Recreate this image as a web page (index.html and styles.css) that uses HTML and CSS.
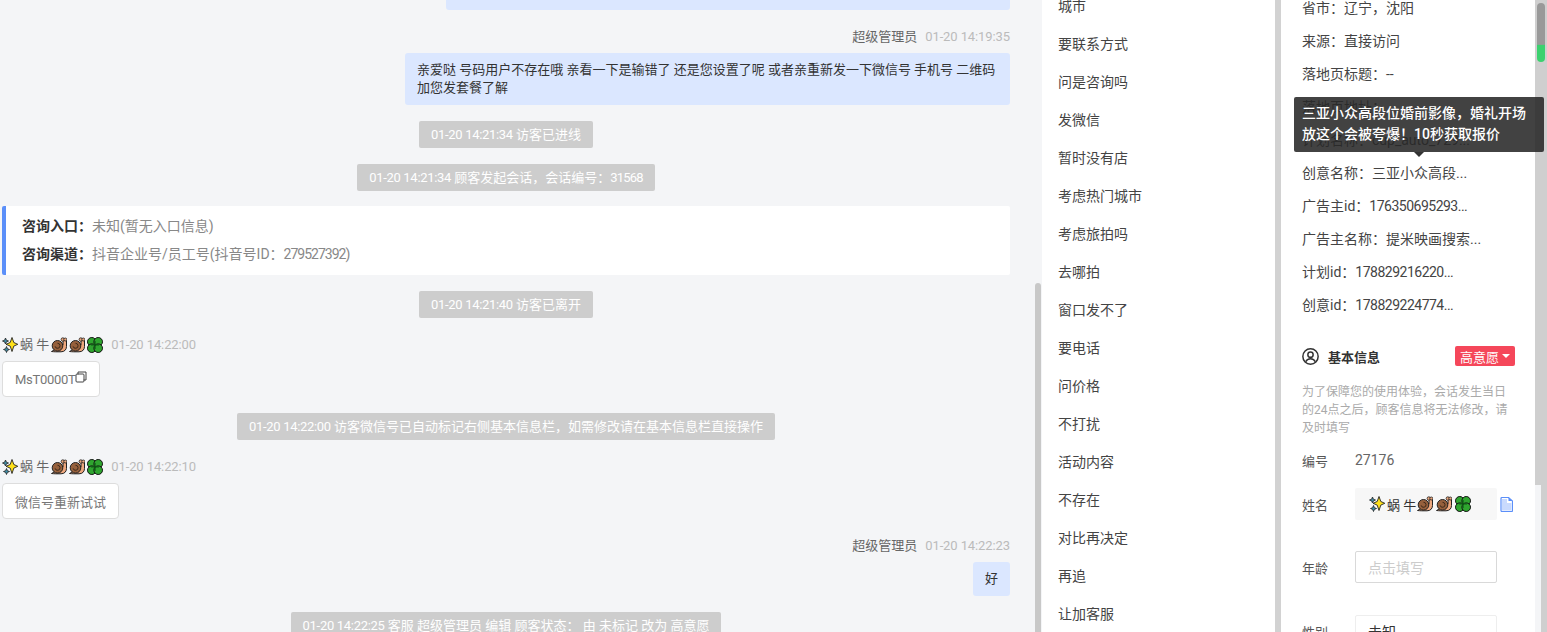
FILE: index.html
```html
<!DOCTYPE html>
<html lang="zh-CN">
<head>
    <meta charset="UTF-8">
    <meta name="viewport" content="width=device-width, initial-scale=1.0">
    <title>会话详情</title>
    <link rel="stylesheet" href="styles.css">
</head>
<body>
    <!--Emoji shapes used in the visitor name-->
    <svg class="sprite" width="0" height="0">
        <symbol id="sparkle" viewBox="0 0 16 16">
            <path d="M3.500 1l.9 2.200 2.100.8-2.100.9-.9 2.100-.9-2.100L.5 4l2.100-.8z" fill="#3f8fa8" stroke="#222" stroke-width=".8"/>
            <path d="M4.500 9.500l.9 2.200 2.100.8-2.100.9-.9 2.100-.9-2.100-2.100-.9 2.100-.8z" fill="#3f8fa8" stroke="#222" stroke-width=".8"/>
            <path d="M10 .5l1.800 5 4 1.800-4 1.800-1.800 5.400-1.800-5.400-4.200-1.800 4.200-1.800z" fill="#ffe11a" stroke="#222" stroke-width=".9"/>
        </symbol>
        <symbol id="snail" viewBox="0 0 16 16">
            <path d="M.5 14.500c3 .4 5 .3 9.500.3 3.500 0 5.500-2.200 5.500-5.300V3.500h-3.500V8z" fill="#eda77d" stroke="#222" stroke-width="1"/>
            <circle cx="6.500" cy="8.800" r="5.300" fill="#96603c" stroke="#222" stroke-width="1"/>
            <path d="M6.500 6.300a2.500 2.500 0 1 1-2.400 3" fill="none" stroke="#3f2a1a" stroke-width="1"/>
            <circle cx="11.800" cy="2.500" r="1.700" fill="#eda77d" stroke="#222" stroke-width=".8"/>
            <circle cx="14.300" cy="2.500" r="1.500" fill="#eda77d" stroke="#222" stroke-width=".8"/>
        </symbol>
        <symbol id="clover" viewBox="0 0 16 16">
            <circle cx="4.800" cy="4.800" r="4.300" fill="#2fa52f" stroke="#111" stroke-width="1"/>
            <circle cx="11.200" cy="4.800" r="4.300" fill="#2fa52f" stroke="#111" stroke-width="1"/>
            <circle cx="4.800" cy="11.200" r="4.300" fill="#2fa52f" stroke="#111" stroke-width="1"/>
            <circle cx="11.200" cy="11.200" r="4.300" fill="#2fa52f" stroke="#111" stroke-width="1"/>
            <path d="M8 4v8M4 8h8" stroke="#0d5a14" stroke-width="1.200"/>
        </symbol>
    </svg>

    <main class="app">
        <section class="chat">
            <div class="bubble bubble-cut"></div>

            <div class="msg msg-right">
                <div class="meta"><span class="meta-name">超级管理员</span><span class="meta-time">01-20 14:19:35</span></div>
                <div class="bubble">亲爱哒 号码用户不存在哦 亲看一下是输错了 还是您设置了呢 或者亲重新发一下微信号 手机号 二维码加您发套餐了解</div>
            </div>

            <div class="sys"><span class="sys-time">01-20 14:21:34</span> 访客已进线</div>
            <div class="sys"><span class="sys-time">01-20 14:21:34</span> 顾客发起会话，会话编号：<span class="sys-no">31568</span></div>

            <div class="source-card">
                <p><b>咨询入口：</b>未知(暂无入口信息)</p>
                <p><b>咨询渠道：</b>抖音企业号/员工号(抖音号ID：<span class="card-no">279527392)</span></p>
            </div>

            <div class="sys"><span class="sys-time">01-20 14:21:40</span> 访客已离开</div>

            <div class="msg">
                <div class="meta">
                    <span class="visitor">
                        <svg class="emoji"><use href="#sparkle"/></svg>蜗 牛<svg class="emoji emoji-gap"><use href="#snail"/></svg><svg class="emoji"><use href="#snail"/></svg><svg class="emoji"><use href="#clover"/></svg>
                    </span>
                    <span class="meta-time">01-20 14:22:00</span>
                </div>
                <div class="visitor-msg"><span class="wx-no">MsT0000T</span><svg class="copy-small" viewBox="0 0 12 12"><path d="M3 3.500V1h8v8H8.500" fill="none" stroke="#444"/><rect x="1" y="3" width="8" height="8" rx="1" fill="none" stroke="#444"/></svg></div>
            </div>

            <div class="sys"><span class="sys-time">01-20 14:22:00</span> 访客微信号已自动标记右侧基本信息栏，如需修改请在基本信息栏直接操作</div>

            <div class="msg">
                <div class="meta">
                    <span class="visitor">
                        <svg class="emoji"><use href="#sparkle"/></svg>蜗 牛<svg class="emoji emoji-gap"><use href="#snail"/></svg><svg class="emoji"><use href="#snail"/></svg><svg class="emoji"><use href="#clover"/></svg>
                    </span>
                    <span class="meta-time">01-20 14:22:10</span>
                </div>
                <div class="visitor-msg">微信号重新试试</div>
            </div>

            <div class="msg msg-right">
                <div class="meta"><span class="meta-name">超级管理员</span><span class="meta-time">01-20 14:22:23</span></div>
                <div class="bubble">好</div>
            </div>

            <div class="sys"><span class="sys-time">01-20 14:22:25</span> 客服 超级管理员 编辑 顾客状态： 由 未标记 改为 高意愿</div>

            <div class="chat-thumb"></div>
        </section>

        <section class="quick">
            <ul class="quick-list">
                <li>城市</li>
                <li>要联系方式</li>
                <li>问是咨询吗</li>
                <li>发微信</li>
                <li>暂时没有店</li>
                <li>考虑热门城市</li>
                <li>考虑旅拍吗</li>
                <li>去哪拍</li>
                <li>窗口发不了</li>
                <li>要电话</li>
                <li>问价格</li>
                <li>不打扰</li>
                <li>活动内容</li>
                <li>不存在</li>
                <li>对比再决定</li>
                <li>再追</li>
                <li>让加客服</li>
            </ul>
        </section>

        <aside class="side">
            <ul class="side-rows">
                <li>省市：辽宁，沈阳</li>
                <li>来源：直接访问</li>
                <li>落地页标题：--</li>
                <li>落地页地址：</li>
                <li>计划名称：cup_auto_729...</li>
                <li>创意名称：三亚小众高段...</li>
                <li>广告主id：<span class="side-no">176350695293...</span></li>
                <li>广告主名称：提米映画搜索...</li>
                <li>计划id：<span class="side-no">178829216220...</span></li>
                <li>创意id：<span class="side-no">178829224774...</span></li>
            </ul>

            <div class="info-head">
                <svg class="user-icon" viewBox="0 0 16 16"><circle cx="8" cy="8" r="7.200" fill="none" stroke="#333" stroke-width="1.400"/><circle cx="8" cy="6.300" r="2.500" fill="none" stroke="#333" stroke-width="1.400"/><path d="M3.500 13c.8-2 2.400-2.900 4.500-2.900s3.700.9 4.500 2.900" fill="none" stroke="#333" stroke-width="1.400"/></svg>
                <span class="info-title">基本信息</span>
                <span class="badge">高意愿<i class="caret"></i></span>
            </div>
            <p class="info-note">为了保障您的使用体验，会话发生当日的24点之后，顾客信息将无法修改，请及时填写</p>

            <div class="field field-plain"><label>编号</label><span class="field-text">27176</span></div>
            <div class="field">
                <label>姓名</label>
                <div class="box box-grey">
                    <svg class="emoji"><use href="#sparkle"/></svg>蜗 牛<svg class="emoji emoji-gap"><use href="#snail"/></svg><svg class="emoji"><use href="#snail"/></svg><svg class="emoji"><use href="#clover"/></svg>
                </div>
                <svg class="copy-blue" viewBox="0 0 13 15"><path d="M1 1.500a1 1 0 0 1 1-1h6.500L12.500 4v9.500a1 1 0 0 1-1 1H2a1 1 0 0 1-1-1z" fill="#fff" stroke="#5b8ff9" stroke-width="1.200"/><path d="M8.500 .5V4h4z" fill="#5b8ff9"/><path d="M2 2h5v4h4.500v7.500H2z" fill="#c9dafd"/></svg>
            </div>
            <div class="field field-age"><label>年龄</label><div class="box box-input">点击填写</div></div>
            <div class="field"><label>性别</label><div class="box box-select">未知</div></div>

            <div class="tooltip">三亚小众高段位婚前影像，婚礼开场放这个会被夸爆！10秒获取报价</div>
        </aside>

        <div class="bar-inner"></div>
        <div class="bar-outer"><div class="bar-outer-thumb"></div></div>
    </main>
</body>
</html>
```

FILE: styles.css
```css
* {
    box-sizing: border-box;
}
html, body {
    margin: 0;
    height: 100%;
    overflow: hidden;
}
body {
    font-family: Roboto, 'Noto Sans CJK SC', sans-serif;
    font-size: 13px;
    color: #333;
    background-color: #f4f5f7;
}
ul, p {
    margin: 0;
    padding: 0;
    list-style: none;
}
.sprite {
    position: absolute;
}
.app {
    position: relative;
    display: flex;
    height: 632px;
    overflow: hidden;
}

/* chat column */
.chat {
    position: relative;
    width: 1042px;
    flex-shrink: 0;
    display: flex;
    flex-direction: column;
    gap: 16px;
    padding: 0 32px 0 2px;
    overflow: hidden;
}
.msg {
    display: flex;
    flex-direction: column;
    align-items: flex-start;
    padding-top: 2px;
    gap: 7px;
    flex-shrink: 0;
}
.msg-right {
    align-items: flex-end;
}
.meta {
    display: flex;
    align-items: center;
    height: 18px;
    line-height: 18px;
}
.meta-name {
    color: #666;
}
.meta-time {
    margin-left: 8px;
    color: #bbb;
    letter-spacing: -.1px;
}
.visitor {
    display: flex;
    align-items: center;
    margin-right: -2px;
    color: #666;
}
.emoji {
    width: 16px;
    height: 16px;
    margin-right: 2px;
    flex-shrink: 0;
}
.emoji-gap {
    margin-left: 2px;
}
.bubble {
    padding: 8px 12px;
    line-height: 18px;
    background-color: #dbe7ff;
    border-radius: 3px;
    align-self: flex-end;
    color: #333;
    max-width: 605px;
    flex-shrink: 0;
}
.bubble-cut {
    width: 564px;
    height: 40px;
    margin-top: -30px;
}
.sys {
    align-self: center;
    height: 27px;
    line-height: 27px;
    padding: 0 12px;
    background-color: #cdcdcd;
    border-radius: 2px;
    color: #fff;
    flex-shrink: 0;
    white-space: nowrap;
}
.sys-time {
    letter-spacing: -.3px;
}
.sys-no {
    letter-spacing: -.8px;
}
.source-card {
    display: flex;
    flex-direction: column;
    gap: 10px;
    height: 69px;
    margin-top: -1px;
    padding: 11px 16px;
    background-color: #fff;
    border-left: 4px solid #5b8ff9;
    border-radius: 2px;
    font-size: 14px;
    line-height: 18px;
    color: #888;
    flex-shrink: 0;
}
.source-card b {
    color: #333;
    font-weight: 700;
}
.card-no {
    letter-spacing: -1px;
}
.visitor-msg {
    display: flex;
    align-items: center;
    height: 36px;
    padding: 0 12px;
    background-color: #fff;
    border: 1px solid #ddd;
    border-radius: 4px;
    color: #777;
}
.wx-no {
    letter-spacing: -.3px;
}
.copy-small {
    width: 12px;
    height: 12px;
    margin-top: -4px;
}
.chat-thumb {
    position: absolute;
    top: 283px;
    right: 1px;
    bottom: 0;
    width: 6px;
    background-color: #c8c8c8;
    border-radius: 3px 3px 0 0;
}

/* quick reply column */
.quick {
    width: 233px;
    flex-shrink: 0;
    background-color: #fff;
    overflow: hidden;
}
.quick-list {
    margin-top: -13px;
    padding-left: 16px;
}
.quick-list li {
    height: 38px;
    line-height: 38px;
    font-size: 14px;
    color: #444;
}

/* right info column */
.side {
    position: relative;
    width: 254px;
    margin-left: 6px;
    flex-shrink: 0;
    padding: 0 21px;
    background-color: #fff;
}
.side-rows {
    margin-top: -8px;
}
.side-rows li {
    height: 33px;
    line-height: 33px;
    font-size: 14px;
    color: #444;
    white-space: nowrap;
}
.side-no {
    letter-spacing: -.5px;
}
.info-head {
    display: flex;
    align-items: center;
    height: 20px;
    margin-top: 24px;
}
.user-icon {
    width: 17px;
    height: 17px;
    margin-right: 9px;
}
.info-title {
    font-weight: 700;
    color: #333;
}
.badge {
    display: flex;
    align-items: center;
    justify-content: center;
    gap: 3px;
    width: 60px;
    height: 20px;
    margin-left: auto;
    margin-right: -1px;
    background-color: #f5475a;
    border-radius: 2px;
    color: #fff;
}
.caret {
    width: 0;
    height: 0;
    border: 4px solid transparent;
    border-top-color: #fff;
    border-bottom-width: 0;
}
.info-note {
    margin-top: 17px;
    font-size: 12px;
    line-height: 18px;
    color: #aaa;
}
.field {
    display: flex;
    align-items: center;
    height: 32px;
    margin-bottom: 31px;
}
.field-plain {
    height: 18px;
    margin-top: 14px;
    margin-bottom: 19px;
}
.field-age {
    margin-bottom: 32px;
}
.field label {
    width: 53px;
    flex-shrink: 0;
    color: #555;
}
.field-text {
    font-size: 14px;
    color: #666;
}
.box {
    display: flex;
    align-items: center;
    width: 142px;
    height: 32px;
    padding-left: 12px;
    border-radius: 2px;
    font-size: 14px;
    color: #333;
}
.box-grey {
    padding-left: 14px;
    font-size: 13px;
    background-color: #f7f7f7;
}
.box-grey .emoji + .emoji {
    margin-left: 1px;
}
.box-grey .emoji-gap {
    margin-left: 4px;
}
.box-input {
    border: 1px solid #d9d9d9;
    color: #ccc;
}
.box-select {
    border: 1px solid #eee;
}
.copy-blue {
    width: 13px;
    height: 15px;
    margin-left: 3px;
}
.tooltip {
    position: absolute;
    z-index: 2;
    top: 97px;
    left: 13px;
    width: 250px;
    height: 55px;
    padding: 6px 8px;
    background-color: rgba(40, 40, 40, .88);
    border-radius: 2px;
    color: #fff;
    font-size: 14px;
    font-weight: 500;
    line-height: 21px;
}
.tooltip::after {
    content: '';
    position: absolute;
    left: 120px;
    bottom: -5px;
    border: 5px solid transparent;
    border-top-color: #333;
    border-bottom-width: 0;
}

/* scroll bars */
.bar-inner {
    position: absolute;
    top: 0;
    left: 1535px;
    width: 6px;
    height: 485px;
    background-color: #cfcfcf;
}
.bar-outer {
    position: absolute;
    top: 0;
    right: 0;
    bottom: 0;
    width: 6px;
    background-color: #cfcfcf;
}
.bar-outer-thumb {
    position: absolute;
    top: 3px;
    left: -4px;
    width: 8px;
    height: 59px;
    border-radius: 4px;
    background: linear-gradient(#999 0, #999 70%, #3bd16f 72%, #3bd16f 100%);
}
.app::after {
    content: '';
    position: absolute;
    top: 0;
    left: 1275px;
    bottom: 0;
    width: 6px;
    background-color: #d2d2d2;
}
```
